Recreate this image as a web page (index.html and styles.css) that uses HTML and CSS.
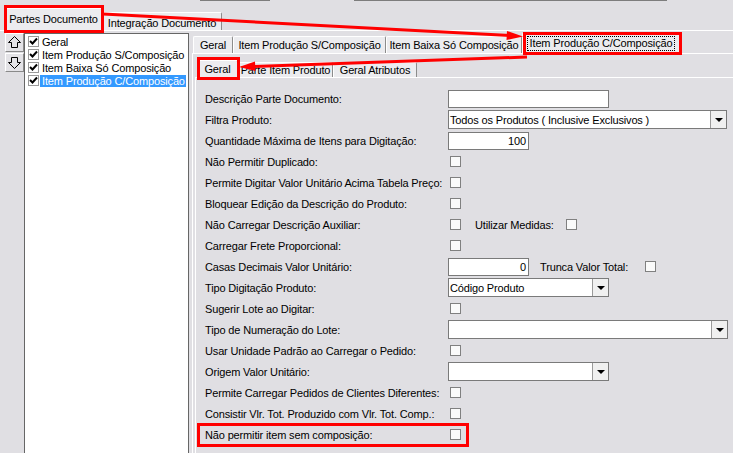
FILE: index.html
```html
<!DOCTYPE html>
<html lang="pt">
<head>
<meta charset="utf-8">
<title>Partes Documento</title>
<link rel="stylesheet" href="styles.css">
</head>
<body>
<div class="topline"><span class="seg seg1"></span><span class="seg seg2"></span></div>
<div class="tabs outer-tabs">
  <div class="tab sel t-partes">Partes Documento</div>
  <div class="tab t-integ">Integração Documento</div>
</div>
<div class="outer-page">
  <div class="movebtns">
    <div class="btn"><svg width="13" height="13" viewBox="0 0 13 13"><polygon points="6.5,0.5 12.5,6.5 9.5,6.5 9.5,11.5 3.5,11.5 3.5,6.5 0.5,6.5" fill="none" stroke="#000" stroke-width="1"/></svg></div>
    <div class="btn"><svg width="13" height="13" viewBox="0 0 13 13"><polygon points="6.5,12.5 12.5,6.5 9.5,6.5 9.5,1.5 3.5,1.5 3.5,6.5 0.5,6.5" fill="none" stroke="#000" stroke-width="1"/></svg></div>
  </div>
  <div class="listbox">
    <div class="li"><span class="lchk"><svg width="9" height="9" viewBox="0 0 9 9"><path d="M1 4 L3.5 6.5 L8 1.5" fill="none" stroke="#000" stroke-width="2"/></svg></span><span class="lt">Geral</span></div>
    <div class="li"><span class="lchk"><svg width="9" height="9" viewBox="0 0 9 9"><path d="M1 4 L3.5 6.5 L8 1.5" fill="none" stroke="#000" stroke-width="2"/></svg></span><span class="lt">Item Produção S/Composição</span></div>
    <div class="li"><span class="lchk"><svg width="9" height="9" viewBox="0 0 9 9"><path d="M1 4 L3.5 6.5 L8 1.5" fill="none" stroke="#000" stroke-width="2"/></svg></span><span class="lt">Item Baixa Só Composição</span></div>
    <div class="li"><span class="lchk"><svg width="9" height="9" viewBox="0 0 9 9"><path d="M1 4 L3.5 6.5 L8 1.5" fill="none" stroke="#000" stroke-width="2"/></svg></span><span class="lt hl">Item Produção C/Composição</span></div>
  </div>
  <div class="tabctl2">
    <div class="tabs l2tabs">
      <div class="tab w-geral2">Geral</div>
      <div class="tab w-s">Item Produção S/Composição</div>
      <div class="tab w-baixa">Item Baixa Só Composição</div>
      <div class="tab sel w-c"><span class="focus">Item Produção C/Composição</span></div>
    </div>
    <div class="page2">
      <div class="tabs l3tabs">
        <div class="tab sel w-geral3">Geral</div>
        <div class="tab w-parte">Parte Item Produto</div>
        <div class="tab w-attr">Geral Atributos</div>
      </div>
      <div class="page3">
        <div class="row"><span class="lbl">Descrição Parte Documento:</span><span class="input w161"></span></div>
        <div class="row"><span class="lbl">Filtra Produto:</span><span class="combo w279"><span class="ctext">Todos os Produtos ( Inclusive Exclusivos )</span><span class="cbtn"><span class="tri"></span></span></span></div>
        <div class="row"><span class="lbl">Quantidade Máxima de Itens para Digitação:</span><span class="input w81 num">100</span></div>
        <div class="row"><span class="lbl">Não Permitir Duplicado:</span><span class="cb"></span></div>
        <div class="row"><span class="lbl">Permite Digitar Valor Unitário Acima Tabela Preço:</span><span class="cb"></span></div>
        <div class="row"><span class="lbl">Bloquear Edição da Descrição do Produto:</span><span class="cb"></span></div>
        <div class="row"><span class="lbl">Não Carregar Descrição Auxiliar:</span><span class="cb"></span><span class="lbl2 med">Utilizar Medidas:</span><span class="cb"></span></div>
        <div class="row"><span class="lbl">Carregar Frete Proporcional:</span><span class="cb"></span></div>
        <div class="row"><span class="lbl">Casas Decimais Valor Unitário:</span><span class="input w81 num">0</span><span class="lbl2 trunca">Trunca Valor Total:</span><span class="cb"></span></div>
        <div class="row"><span class="lbl">Tipo Digitação Produto:</span><span class="combo w161"><span class="ctext">Código Produto</span><span class="cbtn"><span class="tri"></span></span></span></div>
        <div class="row"><span class="lbl">Sugerir Lote ao Digitar:</span><span class="cb"></span></div>
        <div class="row"><span class="lbl">Tipo de Numeração do Lote:</span><span class="combo w280"><span class="ctext"></span><span class="cbtn"><span class="tri"></span></span></span></div>
        <div class="row"><span class="lbl">Usar Unidade Padrão ao Carregar o Pedido:</span><span class="cb"></span></div>
        <div class="row"><span class="lbl">Origem Valor Unitário:</span><span class="combo w161"><span class="ctext"></span><span class="cbtn"><span class="tri"></span></span></span></div>
        <div class="row"><span class="lbl">Permite Carregar Pedidos de Clientes Diferentes:</span><span class="cb"></span></div>
        <div class="row"><span class="lbl">Consistir Vlr. Tot. Produzido com Vlr. Tot. Comp.:</span><span class="cb"></span></div>
        <div class="row"><span class="lbl">Não permitir item sem composição:</span><span class="cb"></span></div>
      </div>
    </div>
  </div>
</div>
<svg class="annot" width="733" height="453" viewBox="0 0 733 453">
  <g fill="none" stroke="#ff0000" stroke-width="3">
    <rect x="5.5" y="6.5" width="97" height="25"/>
    <rect x="524.5" y="33.5" width="156" height="20"/>
    <rect x="198.5" y="58.5" width="40" height="20"/>
    <rect x="198.5" y="424.5" width="269" height="21"/>
    <line x1="103" y1="14" x2="510" y2="35.5"/>
    <line x1="527" y1="57" x2="252" y2="66.5"/>
  </g>
  <g fill="#ff0000">
    <polygon points="523,36.5 507,31 506.5,40"/>
    <polygon points="239,67 255,61.5 255.5,71"/>
  </g>
</svg>
</body>
</html>
```
FILE: styles.css
```css
* { box-sizing: border-box; }
html, body { margin: 0; padding: 0; }
body {
  width: 733px;
  height: 453px;
  overflow: hidden;
  position: relative;
  background: #e0dfe3;
  font-family: "Liberation Sans", Arial, sans-serif;
  font-size: 11px;
  letter-spacing: -0.15px;
  color: #000;
}

.topline { height: 8px; display: flex; align-items: flex-start; }
.seg { display: block; height: 1px; background: #7d7d7d; }
.seg1 { margin-left: 200px; width: 70px; }
.seg2 { margin-left: 84px; width: 313px; }

.tabs { display: flex; align-items: flex-end; }
.tab {
  display: flex;
  align-items: center;
  justify-content: center;
  white-space: nowrap;
  background: #ececef;
  border-top: 1px solid #fff;
  border-left: 1px solid #fff;
  border-right: 1px solid #8c8c8c;
  border-radius: 2px 2px 0 0;
}
.tab.sel { position: relative; margin-bottom: -1px; background: #ececef; z-index: 1; }

.outer-tabs { height: 22px; padding-left: 5px; }
.t-partes { width: 97px; height: 23px; padding-bottom: 2px; }
.t-integ { width: 120px; height: 18px; padding-top: 2px; }

.outer-page {
  border-top: 1px solid #fff;
  display: flex;
  align-items: flex-start;
  padding: 2px 0 0 5px;
  height: 423px;
}

.movebtns { width: 19px; display: flex; flex-direction: column; gap: 1px; }
.btn {
  width: 19px;
  height: 19px;
  display: flex;
  align-items: center;
  justify-content: center;
  background: #e4e3e7;
  border-top: 1px solid #fff;
  border-left: 1px solid #fff;
  border-right: 1px solid #8a8a8a;
  border-bottom: 1px solid #8a8a8a;
}

.listbox {
  width: 165px;
  height: 430px;
  background: #fff;
  border: 1px solid #666;
  padding-top: 1px;
}
.li { height: 13px; display: flex; align-items: center; padding-left: 3px; }
.lchk {
  width: 11px;
  height: 11px;
  display: flex;
  align-items: center;
  justify-content: center;
  flex: none;
  background: #fff;
  border: 1px solid #9a9a9a;
}
.lchk svg { display: block; }
.lt { padding-left: 2px; height: 12px; line-height: 12px; white-space: nowrap; margin-left: 1px; }
.lt.hl { background: #3399ff; color: #fff; width: 146px; }

.tabctl2 { margin-left: 3px; flex: 1; display: flex; flex-direction: column; }
.l2tabs { height: 20px; padding-left: 1px; }
.l2tabs .tab { height: 17px; }
.l2tabs .tab.sel { height: 21px; padding-bottom: 1px; }
.w-geral2 { width: 40px; }
.w-s { width: 153px; }
.w-baixa { width: 136px; }
.w-c { width: 158px; }
.focus { border: 1px dotted #000; padding: 0 2px; line-height: 13px; }

.page2 {
  border-top: 1px solid #fff;
  border-left: 1px solid #fff;
  padding-left: 2px;
  display: flex;
  flex-direction: column;
  height: 420px;
}
.l3tabs { height: 23px; padding-left: 2px; }
.l3tabs .tab { height: 15px; }
.l3tabs .tab.sel { height: 18px; padding-bottom: 2px; }
.w-geral3 { width: 41px; }
.w-parte { width: 95px; }
.w-attr { width: 84px; }

.page3 {
  border-top: 1px solid #fff;
  border-left: 1px solid #fff;
  padding: 10px 0 0 9px;
  flex: 1;
}

.row { height: 21px; display: flex; align-items: center; }
.lbl { width: 243px; flex: none; white-space: nowrap; }
.lbl2 { flex: none; white-space: nowrap; }
.med { margin-left: 14px; width: 89px; }
.trunca { margin-left: 11px; width: 103px; }

.input {
  height: 18px;
  background: #fff;
  border: 1px solid #7a7a7a;
  display: flex;
  align-items: center;
  padding: 0 2px;
}
.input.num { justify-content: flex-end; }
.w161 { width: 161px; }
.w81 { width: 81px; }
.w279 { width: 279px; }
.w280 { width: 280px; }

.combo {
  height: 19px;
  background: #fff;
  border: 1px solid #7a7a7a;
  display: flex;
  align-items: stretch;
}
.ctext { flex: 1; padding-left: 1px; display: flex; align-items: center; white-space: nowrap; }
.cbtn {
  width: 16px;
  background: #f0f0f0;
  border-left: 1px solid #9a9a9a;
  display: flex;
  align-items: center;
  justify-content: center;
}
.tri {
  width: 0;
  height: 0;
  border-left: 4px solid transparent;
  border-right: 4px solid transparent;
  border-top: 4px solid #000;
}

.cb {
  width: 11px;
  height: 11px;
  flex: none;
  background: #fafafa;
  border: 1px solid #808080;
  margin-left: 2px;
}

.annot { position: absolute; left: 0; top: 0; pointer-events: none; z-index: 5; }
```
